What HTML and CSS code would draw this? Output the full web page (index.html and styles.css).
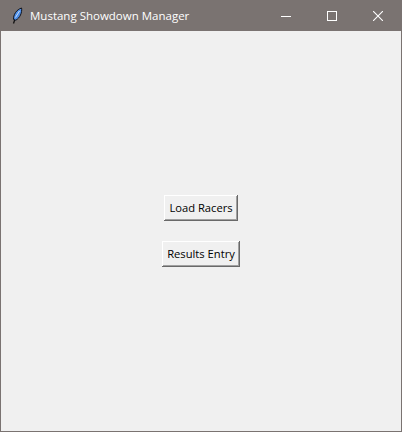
FILE: index.html
```html
<!DOCTYPE html>
<html lang="en">
<head>
    <meta charset="UTF-8">
    <meta name="viewport" content="width=device-width, initial-scale=1">
    <title>Mustang Showdown Manager</title>
    <link rel="stylesheet" href="styles.css">
</head>
<body>
<div class="window">
    <!-- Title bar -->
    <div class="titlebar">
        <svg class="app-icon" width="16" height="18" viewBox="0 0 16 18">
            <path d="M4.5 16.5 L6 12" stroke="#111" stroke-width="1.3" fill="none"/>
            <path d="M4.6 12.5 C4 8 7.5 2.5 12.6 1 C13.2 5.5 11 11 6.8 13.2 Z" fill="#4f8fe8" stroke="#10131c" stroke-width="1"/>
            <path d="M6.5 10.5 L10.5 4" stroke="#c9def8" stroke-width="1" fill="none"/>
        </svg>
        <span class="title">Mustang Showdown Manager</span>
        <div class="controls">
            <div class="control">
                <svg width="10" height="10" viewBox="0 0 10 10"><path d="M0 5.5 H10" stroke="#fff" stroke-width="1"/></svg>
            </div>
            <div class="control">
                <svg width="10" height="10" viewBox="0 0 10 10"><rect x="0.5" y="0.5" width="9" height="9" fill="none" stroke="#fff" stroke-width="1"/></svg>
            </div>
            <div class="control">
                <svg width="10" height="10" viewBox="0 0 10 10"><path d="M0 0 L10 10 M10 0 L0 10" stroke="#fff" stroke-width="1.1"/></svg>
            </div>
        </div>
    </div>

    <!-- Content -->
    <div class="content">
        <button class="btn btn-load">Load Racers</button>
        <button class="btn btn-results">Results Entry</button>
    </div>
</div>
</body>
</html>
```

FILE: styles.css
```css
* { box-sizing: border-box; margin: 0; padding: 0; }
html, body { height: 100%; }
body {
    font-family: "Open Sans", "Noto Sans", "Liberation Sans", sans-serif;
    background: #f0f0f0;
}
.window {
    height: 432px;
    display: flex;
    flex-direction: column;
    border: 1px solid #7a7371;
    border-top: none;
}
/* Title bar */
.titlebar {
    height: 31px;
    flex: none;
    display: flex;
    align-items: center;
    background: #7a7371;
    color: #fff;
    padding-left: 8px;
}
.app-icon { flex: none; }
.title {
    margin-left: 5px;
    font-size: 11.5px;
    white-space: nowrap;
}
.controls {
    margin-left: auto;
    display: flex;
    height: 100%;
}
.control {
    width: 46px;
    display: flex;
    align-items: center;
    justify-content: center;
}
/* Content */
.content {
    flex: 1;
    display: flex;
    flex-direction: column;
    align-items: center;
    padding-top: 164px;
    gap: 20px;
}
.btn {
    height: 26px;
    padding-bottom: 2px;
    font-family: inherit;
    font-size: 11.2px;
    color: #000;
    background: #f0f0f0;
    border: none;
    box-shadow: inset -1px -1px #696969, inset 1px 1px #fff, inset -2px -2px #a0a0a0;
}
.btn-load { width: 74px; }
.btn-results { width: 78px; }
```
